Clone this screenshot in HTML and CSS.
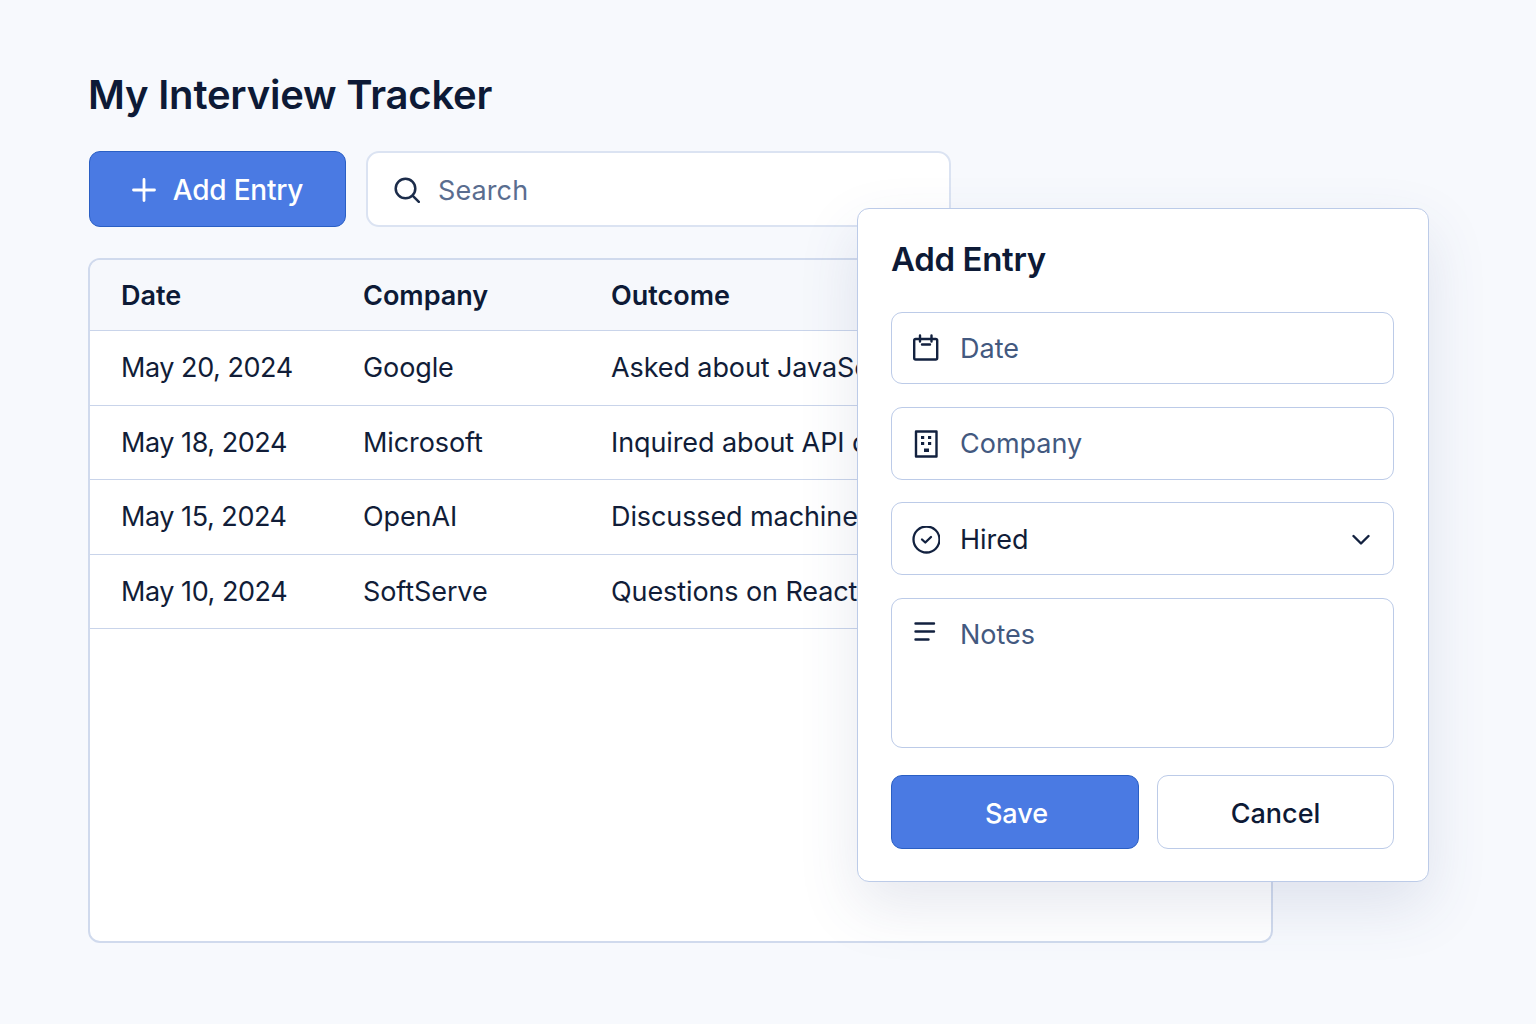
FILE: index.html
```html
<!DOCTYPE html>
<html lang="en">
  <head>
    <meta charset="UTF-8" />
    <title>My Interview Tracker</title>
    <link rel="stylesheet" href="styles.css">
  </head>
  <body>
    <div class="page">
      <h1 class="title">My Interview Tracker</h1>

      <!-- toolbar -->
      <div class="toolbar">
        <button class="btn-add">
          <svg class="icon-plus" viewBox="0 0 24 24" fill="none" stroke="currentColor" stroke-width="2.800" stroke-linecap="round"><path d="M12 1.500v21M1.500 12h21"/></svg>
          <span>Add Entry</span>
        </button>
        <div class="search">
          <svg class="icon" viewBox="0 0 26 26" fill="none" stroke="#1c2c4a" stroke-width="2.500" stroke-linecap="round"><circle cx="11.500" cy="11.500" r="9.800"/><path d="M18.800 18.800l6 6"/></svg>
          <span>Search</span>
        </div>
      </div>

      <!-- table -->
      <div class="table">
        <div class="row head">
          <div>Date</div>
          <div>Company</div>
          <div>Outcome</div>
        </div>
        <div class="row">
          <div class="date">May 20, 2024</div>
          <div>Google</div>
          <div>Asked about JavaScript</div>
        </div>
        <div class="row">
          <div class="date">May 18, 2024</div>
          <div>Microsoft</div>
          <div>Inquired about API design</div>
        </div>
        <div class="row">
          <div class="date">May 15, 2024</div>
          <div>OpenAI</div>
          <div>Discussed machine learning</div>
        </div>
        <div class="row">
          <div class="date">May 10, 2024</div>
          <div>SoftServe</div>
          <div>Questions on React hooks</div>
        </div>
      </div>
    </div>

    <!-- add entry dialog -->
    <div class="dialog">
      <h2 class="dialog-title">Add Entry</h2>

      <div class="field">
        <svg class="field-icon" viewBox="0 0 28 28" fill="none" stroke="#12213f" stroke-width="2.400" stroke-linejoin="round" stroke-linecap="round"><rect x="2.200" y="5" width="23" height="20.500" rx="1.500"/><path d="M8 1.500v6M19.500 1.500v6M10 10.500h8"/></svg>
        <span>Date</span>
      </div>
      <div class="field company">
        <svg class="field-icon" viewBox="0 0 28 28" fill="none" stroke="#12213f" stroke-width="2.400" stroke-linejoin="round"><path d="M4 1.500h20.500v25H4z"/><g fill="#12213f" stroke="none"><rect x="9" y="6" width="3.200" height="3"/><rect x="16" y="6" width="3.200" height="3"/><rect x="9" y="12" width="3.200" height="3"/><rect x="16" y="12" width="3.200" height="3"/><rect x="12" y="18.500" width="5" height="3.500"/></g></svg>
        <span>Company</span>
      </div>
      <div class="field filled">
        <svg class="field-icon" viewBox="0 0 28 28" fill="none" stroke="#12213f" stroke-width="2.300" stroke-linecap="round" stroke-linejoin="round"><circle cx="14.500" cy="13.500" r="13"/><path d="M10 13.500l3.300 3 5.700-5.500"/></svg>
        <span>Hired</span>
        <svg class="chevron" viewBox="0 0 18 12" fill="none" stroke="#12213f" stroke-width="2.400" stroke-linecap="round" stroke-linejoin="round"><path d="M1.500 2l7.500 7.500L16.500 2"/></svg>
      </div>
      <div class="field notes">
        <svg class="field-icon" viewBox="0 0 28 28" fill="none" stroke="#12213f" stroke-width="2.400" stroke-linecap="round"><path d="M3.500 5.500h18.500M3.500 13.500h18.500M3.500 21.500h13"/></svg>
        <span>Notes</span>
      </div>

      <div class="actions">
        <button class="btn-save">Save</button>
        <button class="btn-cancel">Cancel</button>
      </div>
    </div>
  </body>
</html>
```

FILE: styles.css
```css
* {
  margin: 0;
  padding: 0;
  box-sizing: border-box;
}

body {
  background-color: #f7f9fd;
  font-family: Inter, "Liberation Sans", sans-serif;
  color: #0f1b35;
  width: 1536px;
  height: 1024px;
  overflow: hidden;
  position: relative;
}

.page {
  width: 1185px;
  margin-left: 88px;
  padding-top: 70px;
}

.title {
  font-size: 40px;
  line-height: 50px;
  font-weight: 600;
  letter-spacing: -0.2px;
  color: #0d1a36;
}

/* toolbar */
.toolbar {
  display: flex;
  gap: 20px;
  margin-top: 31px;
}

.btn-add {
  width: 257px;
  height: 76px;
  margin-left: 1px;
  padding-top: 2px;
  display: flex;
  align-items: center;
  justify-content: center;
  gap: 17px;
  background-color: #4a7ae3;
  border: 1px solid #2a5fc4;
  border-radius: 11px;
  color: #fff;
  font-family: inherit;
  font-size: 28px;
  font-weight: 500;
  letter-spacing: -0.2px;
}

.icon-plus {
  width: 24px;
  height: 24px;
}

.search {
  width: 585px;
  height: 76px;
  padding-top: 2px;
  display: flex;
  align-items: center;
  gap: 18px;
  padding-left: 26px;
  background-color: #fff;
  border: 2px solid #dbe3f2;
  border-radius: 13px;
  color: #5a6d8f;
  font-size: 27px;
  letter-spacing: 0.1px;
}

.icon {
  width: 26px;
  height: 26px;
}

/* table */
.table {
  height: 685px;
  margin-top: 31px;
  background-color: #fff;
  border: 2px solid #d0daed;
  border-radius: 12px;
  overflow: hidden;
}

.row {
  display: grid;
  grid-template-columns: 242px 248px 1fr;
  height: 74.5px;
  align-items: center;
  padding-left: 31px;
  border-bottom: 1px solid #c9d4ea;
  font-size: 27px;
  letter-spacing: -0.1px;
  color: #111d38;
  white-space: nowrap;
}

.row .date {
  letter-spacing: -0.45px;
}

.row.head {
  height: 71px;
  padding-top: 1px;
  background-color: #f6f8fc;
  font-weight: 600;
  letter-spacing: 0;
  color: #0d1a36;
}

/* dialog */
.dialog {
  position: absolute;
  left: 857px;
  top: 208px;
  width: 572px;
  height: 674px;
  padding: 28px 34px 0 33px;
  background-color: #fff;
  border: 1px solid #bccbe8;
  border-radius: 12px;
  box-shadow: 0 24px 60px rgba(60, 80, 130, 0.13);
}

.dialog-title {
  font-size: 33px;
  line-height: 44px;
  font-weight: 600;
  letter-spacing: -0.35px;
  color: #0d1a36;
  margin-bottom: 31px;
}

.field {
  height: 72px;
  display: flex;
  align-items: center;
  gap: 20px;
  padding-left: 20px;
  margin-bottom: 23px;
  border: 1px solid #bccbe8;
  border-radius: 11px;
  font-size: 27px;
  color: #43597f;
}

.field.company {
  height: 73px;
  margin-bottom: 22px;
}

.field.filled {
  height: 73px;
  padding-top: 2px;
  color: #111d38;
}

.field.notes {
  height: 150px;
  align-items: flex-start;
  padding-top: 19px;
  margin-bottom: 27px;
}

.field-icon {
  width: 28px;
  height: 28px;
  flex-shrink: 0;
}

.chevron {
  width: 18px;
  height: 12px;
  margin-left: auto;
  margin-right: 23px;
}

.actions {
  display: flex;
  gap: 18px;
}

.btn-save,
.btn-cancel {
  height: 74px;
  padding-top: 2px;
  border-radius: 11px;
  font-family: inherit;
  font-size: 27px;
  font-weight: 500;
}

.btn-save {
  width: 248px;
  padding-left: 3px;
  background-color: #4a7ae3;
  border: 1px solid #2a5fc4;
  color: #fff;
}

.btn-cancel {
  width: 237px;
  background-color: #fff;
  border: 1px solid #bccbe8;
  color: #0d1a36;
}
```
